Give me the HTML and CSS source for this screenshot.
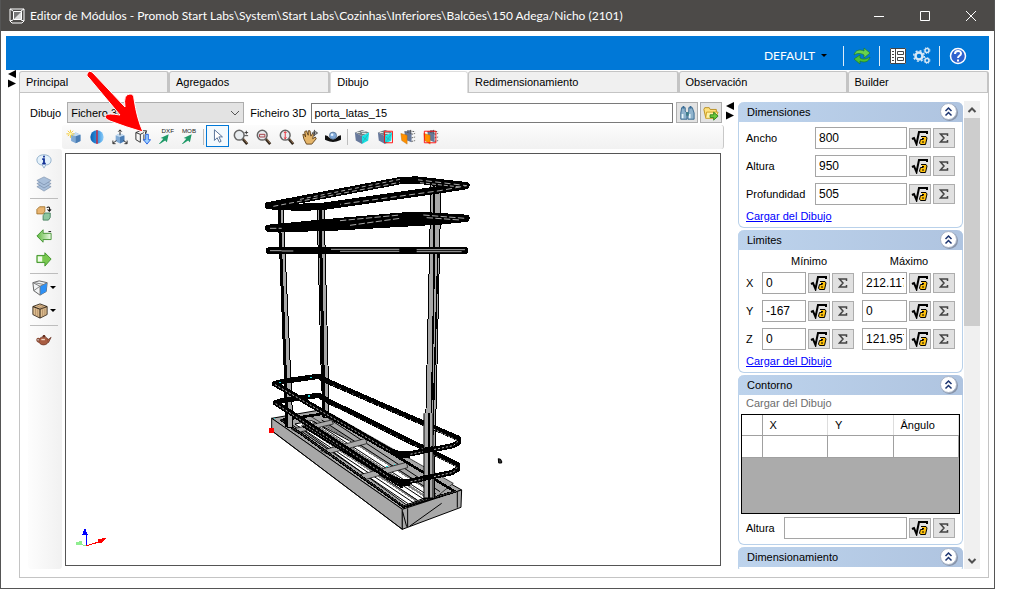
FILE: index.html
```html
<!DOCTYPE html>
<html lang="es">
<head>
<meta charset="utf-8">
<title>Editor de Módulos</title>
<link rel="stylesheet" href="styles.css">
</head>
<body>
<svg class="defs" aria-hidden="true">
  <defs>
    <linearGradient id="blueball"><stop offset="0" stop-color="#0d5fae"/><stop offset=".5" stop-color="#2b8fe0"/><stop offset="1" stop-color="#8fcdf8"/></linearGradient>
    <linearGradient id="greenfade"><stop offset="0" stop-color="#5cb83c"/><stop offset="1" stop-color="#eefbe8"/></linearGradient>
    <symbol id="cube" viewBox="0 0 16 16">
      <path d="M2 4l6-3 6 3v8l-6 3-6-3z" fill="#7fa9d4"/><path d="M2 4l6-3 6 3-6 2z" fill="#c4dcf2"/><path d="M8 6l6-2v8l-6 3z" fill="#4a7db4"/>
    </symbol>
    <symbol id="lens" viewBox="0 0 18 18">
      <path d="M11 11l5 6" stroke="#33281d" stroke-width="3"/><path d="M12 11l4 5" stroke="#a8815d" stroke-width="1"/>
      <circle cx="7" cy="7" r="5.500" fill="#e8ecef" stroke="#666" stroke-width="1.700"/>
    </symbol>
    <symbol id="root" viewBox="0 0 18 16">
      <path d="M1 9l2-1 2.500 6L8 2h8v2" fill="none" stroke="#000" stroke-width="2"/>
      <path d="M10 6.500h5l1 1.500-1.500 6.500h-5L8.500 13l1-3.500h3" fill="#ffc20e" stroke="#000" stroke-width="1"/><path d="M11 12h2M11 8.500h2" stroke="#000"/>
    </symbol>
    <symbol id="sigma" viewBox="0 0 10 10"><path d="M8.500 3V1H1.500l3.500 4-3.500 4h7V7" fill="none" stroke="#444" stroke-width="1.500"/></symbol>
    <symbol id="fold" viewBox="0 0 20 20">
      <circle cx="10.500" cy="10.500" r="8.500" fill="#8793a8"/><circle cx="9.500" cy="9.500" r="8" fill="#fff" stroke="#a9b5c8"/>
      <path d="M6.500 9l3-3 3 3M6.500 13.500l3-3 3 3" fill="none" stroke="#1b3470" stroke-width="1.500"/>
    </symbol>
    <symbol id="cyancube" viewBox="0 0 18 18">
      <path d="M1 4l8-3 8 3-8 4z" fill="#747d82"/><path d="M3 4h4M8 3h5M9 5h5" stroke="#eef1f2"/><path d="M1 4l8 4v9l-7-4z" fill="#66789b"/>
      <path d="M9 8l8-4-1 9-7 4z" fill="#12e4e6"/><path d="M9 16l7-10M10 9l5 4" stroke="#3f9aa0" stroke-width=".7"/>
    </symbol>
    <symbol id="orangebox" viewBox="0 0 18 18">
      <path d="M5 3l7-2 1 4v10l-7-3z" fill="#66789b"/><path d="M5 3l8 2M8 2l9 1M13 6l4-1M13 10l4-1M13 14l4-1M12 1v4" stroke="#555" stroke-dasharray="2 1"/>
      <path d="M1 5l7 2v10l-6-4z" fill="#ff9000" stroke="#b96800" stroke-width=".5"/>
    </symbol>
    <symbol id="greenarrow" viewBox="0 0 18 18">
      <path d="M2 17l5-6-3-1 9-4-2 9-2-2-6 4z" fill="#1f9a68"/>
    </symbol>
    <symbol id="pair" viewBox="0 0 8 18"><path d="M8 0v8L0 4zM0 9.500v8l8-4z" fill="#000"/></symbol>
  </defs>
</svg>

<div class="window">
  <header class="titlebar">
    <svg class="app-icon" viewBox="0 0 16 16"><path d="M1 1h14v12l-2 2H3l-2-2z" fill="none" stroke="#fff"/><path d="M4.500 3.500h8v8h-8z" fill="#ddd" stroke="#fff"/><path d="M5 4h7l-7 7z" fill="#777"/><path d="M1 1l3 2M15 1l-3 2M1 13l3-1M15 13l-3-1" stroke="#fff"/></svg>
    <h1 class="title">Editor de Módulos - Promob Start Labs\System\Start Labs\Cozinhas\Inferiores\Balcões\150 Adega/Nicho (2101)</h1>
    <div class="caption-buttons">
      <button class="caption" aria-label="Minimizar"><svg viewBox="0 0 10 10"><path d="M0 5.500h10" stroke="#fff"/></svg></button>
      <button class="caption" aria-label="Maximizar"><svg viewBox="0 0 10 10"><path d="M.5.5h9v9h-9z" fill="none" stroke="#fff"/></svg></button>
      <button class="caption" aria-label="Cerrar"><svg viewBox="0 0 10 10"><path d="M0 0l10 10M10 0L0 10" stroke="#fff"/></svg></button>
    </div>
  </header>

  <div class="client">
    <div class="ribbon">
      <button class="profile">DEFAULT<svg class="caret" viewBox="0 0 6 4"><path d="M0 0h6L3 3z" fill="#000"/></svg></button>
      <span class="rule"></span>
      <button class="ribbon-button" aria-label="Actualizar"><svg viewBox="0 0 18 18"><path d="M1 8c1-5 6-6 10-4V1l6 5-6 5V8C8 6 4 6 1 8z" fill="#68d34c" stroke="#1c7d2b" stroke-width=".7"/><path d="M17 10c-1 5-6 6-10 4v3l-6-5 6-4v3c3 2 7 1 10-1z" fill="#4dc233" stroke="#1c7d2b" stroke-width=".7"/></svg></button>
      <span class="rule"></span>
      <button class="ribbon-button" aria-label="Panel"><svg viewBox="0 0 18 18"><path d="M1 1h16v16H1z" fill="#fff"/><path d="M1.500 1.500h15v15h-15zM6.500 2v14M8.500 4.500h6v3h-6zM8.500 10.500h6v3h-6zM3 4.500h2M3 7.500h2M3 10.500h2M3 13.500h2" fill="none" stroke="#444"/></svg></button>
      <button class="ribbon-button" aria-label="Opciones"><svg viewBox="0 0 18 18"><g fill="none" stroke="#d8e8f6"><circle cx="6" cy="9" r="3.500" stroke-width="2.500"/><circle cx="6" cy="9" r="5.300" stroke-width="1.500" stroke-dasharray="2 2.160"/><circle cx="14" cy="3.500" r="2" stroke-width="1.500"/><circle cx="14" cy="13.500" r="2" stroke-width="1.500"/><circle cx="14" cy="3.500" r="3" stroke-dasharray="1 1.360"/><circle cx="14" cy="13.500" r="3" stroke-dasharray="1 1.360"/></g></svg></button>
      <span class="rule"></span>
      <button class="ribbon-button help" aria-label="Ayuda"><svg viewBox="0 0 18 18"><circle cx="9" cy="9" r="7.500" fill="#2f62cf" stroke="#fff" stroke-width="1.500"/><path d="M6 7c0-4 6-4 6-.5C12 9 9 8.500 9 11M9 12.500v2" fill="none" stroke="#fff" stroke-width="2"/></svg></button>
    </div>

    <div class="tabrow">
      <button class="shift" aria-label="Mover panel izquierdo"><svg viewBox="0 0 8 18"><use href="#pair"/></svg></button>
      <div class="tabs" role="tablist">
        <button class="tab t1" role="tab">Principal</button>
        <button class="tab t2" role="tab">Agregados</button>
        <button class="tab t3 active" role="tab" aria-selected="true">Dibujo</button>
        <button class="tab t4" role="tab">Redimensionamiento</button>
        <button class="tab t5" role="tab">Observación</button>
        <button class="tab t6" role="tab">Builder</button>
      </div>
    </div>

    <main class="page">
      <section class="editor">
        <form class="source">
          <label for="kind">Dibujo</label>
          <span class="select-box">
            <select id="kind"><option>Fichero 3D</option></select>
            <svg viewBox="0 0 10 6"><path d="M1 1l4 4 4-4" fill="none" stroke="#555"/></svg>
          </span>
          <label for="file">Ficheiro 3D</label>
          <input id="file" class="file" type="text" value="porta_latas_15">
          <button type="button" class="square" aria-label="Buscar"><svg viewBox="0 0 18 18"><path d="M3 3h4v4l2 2V16H2V9zM15 3h-4v4l-1 2v7h7V9z" fill="#8fb3cd" stroke="#32648c"/><path d="M4 10v5M12 10v5" stroke="#e7f7fa" stroke-width="2"/><path d="M8 8h3v4H8z" fill="#3d7d88"/><path d="M4 1h2v3H4zM12 1h2v3h-2z" fill="#3b6c97"/></svg></button>
          <button type="button" class="square" aria-label="Abrir"><svg viewBox="0 0 18 18"><path d="M2 3h5l1 2h7v9H3L1 5z" fill="#ffe17c" stroke="#b58a17"/><path d="M4 8h13l-3 7H3z" fill="#fff2a6" stroke="#c99a1c"/><path d="M8 11h4V8l5 4.500-5 4.500v-3H8z" fill="#6cc93b" stroke="#2c7d18"/></svg></button>
        </form>

        <div class="toolbar">
          <button class="tool" aria-label="Nuevo"><svg viewBox="0 0 18 18"><use href="#cube" x="4" y="3" width="14" height="14"/><path d="M5 1v9M.5 5.500h9M2 2l6 6M8 2L2 8" stroke="#f4c527" stroke-width="1"/><circle cx="5" cy="5.500" r="1.500" fill="#fff8b0"/></svg></button>
          <button class="tool" aria-label="Espejo"><svg viewBox="0 0 18 18"><circle cx="9" cy="9" r="7.500" fill="url(#blueball)"/><path d="M9 1v16" stroke="#f00" stroke-width="1.200"/></svg></button>
          <button class="tool" aria-label="Extender"><svg viewBox="0 0 18 18"><use href="#cube" x="2" y="4" width="14" height="13"/><path d="M9 7V1M7 3l2-2 2 2M5 13l-4 3M1 13v3.500h3M13 13l4 3M17 13v3.500h-3" fill="none" stroke="#222"/></svg></button>
          <button class="tool" aria-label="Importar"><svg viewBox="0 0 18 18"><path d="M1 4l5 2v9l-5-3zM6 6l4-2M1 4l5-2M12 6V3M8 2h5l-1 3M10 6v7" fill="none" stroke="#222"/><path d="M12 6h3v6h2.500L13.500 17l-4-5H12z" fill="#9ed1ff" stroke="#1e5be0"/></svg></button>
          <button class="tool label-tool" aria-label="Exportar DXF"><svg viewBox="0 0 18 18"><use href="#greenarrow" x="-1" y="0" width="18" height="18"/><text x="4" y="5">DXF</text></svg></button>
          <button class="tool label-tool" aria-label="Exportar MOB"><svg viewBox="0 0 18 18"><use href="#greenarrow" x="-1" y="0" width="18" height="18"/><text x="1" y="5">MOB</text></svg></button>
          <span class="divider"></span>
          <button class="tool selected" aria-label="Seleccionar"><svg viewBox="0 0 18 18"><path d="M5 2v12l3-3 2.500 5 2-1-2.500-5h4z" fill="#fff" stroke="#47648e"/></svg></button>
          <button class="tool" aria-label="Zoom"><svg viewBox="0 0 18 18"><use href="#lens"/><path d="M13 4h4M15 2v4M13 7.500h4" stroke="#333"/></svg></button>
          <button class="tool" aria-label="Zoom ventana"><svg viewBox="0 0 18 18"><use href="#lens"/><path d="M4 6h6v3H4z" fill="#e4e4e4" stroke="#a03038"/></svg></button>
          <button class="tool" aria-label="Zoom extensión"><svg viewBox="0 0 18 18"><use href="#lens"/><path d="M7 3v8M5.500 4.500L7 3l1.500 1.500M5.500 9.500L7 11l1.500-1.500" fill="none" stroke="#e8232c"/></svg></button>
          <button class="tool" aria-label="Desplazar"><svg viewBox="0 0 18 18"><path d="M5 17l-3-6-1-5 2 0 1 3-1-6 2-1 2 5V2l2 0 1 6 2-3 1 1-1 5 3-2 1 2-5 6z" fill="#e5b569" stroke="#5b3c14"/><path d="M14 1v7M11 4.500h7" stroke="#333"/><circle cx="14.500" cy="4.500" r="2" fill="none" stroke="#666"/></svg></button>
          <button class="tool" aria-label="Orbitar"><svg viewBox="0 0 18 18"><path d="M0 7l3 1c3 4 9 4 12 0l3-1v5l-2 1c-4 2-10 2-14 0l-2-1z" fill="#111"/><circle cx="9" cy="7.500" r="4" fill="#7fa8d8" stroke="#5c7693"/><circle cx="8" cy="6.500" r="1.500" fill="#e6f3ff"/></svg></button>
          <span class="divider"></span>
          <button class="tool" aria-label="Vista cubo"><svg viewBox="0 0 18 18"><use href="#cyancube"/></svg></button>
          <button class="tool" aria-label="Límites cubo"><svg viewBox="0 0 18 18"><use href="#cyancube"/><path d="M8.500 2.500h9v13h-9z" fill="none" stroke="#f00"/></svg></button>
          <button class="tool" aria-label="Vista puerta"><svg viewBox="0 0 18 18"><use href="#orangebox"/></svg></button>
          <button class="tool" aria-label="Límites puerta"><svg viewBox="0 0 18 18"><use href="#orangebox"/><path d="M1.500 2.500h13v13h-13z" fill="none" stroke="#f00"/></svg></button>
        </div>

        <div class="workspace">
          <div class="sidebar">
            <button class="tool" aria-label="Información"><svg viewBox="0 0 18 18"><path d="M9 2C4 2 1 4.500 1 8s3 5.500 6 5.500L9 17l2-3.500c4 0 6-2.500 6-5.500s-3-6-8-6z" fill="#e4f1fb" stroke="#8cabc8"/><path d="M9 3v2M7 7h2v5M7 12h4" fill="none" stroke="#102f94" stroke-width="2"/></svg></button>
            <button class="tool" aria-label="Capas"><svg viewBox="0 0 18 18"><g fill="#a9bfda" stroke="#687f9c" stroke-width=".6"><path d="M1 12l8-4 8 4-8 5z"/><path d="M1 8.500l8-4 8 4-8 5z"/><path d="M1 5l8-4 8 4-8 5z"/></g></svg></button>
            <span class="divider"></span>
            <button class="tool" aria-label="Reemplazar"><svg viewBox="0 0 18 18"><path d="M1 5l3-3h6v5l-2 3H1z" fill="#e9b572" stroke="#a3752f"/><path d="M8 12l2-3h6v5l-2 3H8z" fill="#8dc8a0" stroke="#457f5c"/><path d="M12 3c3-2 4 0 3 3M13 5l2 2 2-2" fill="none" stroke="#111" stroke-width="1.200"/></svg></button>
            <button class="tool" aria-label="Anterior"><svg viewBox="0 0 18 18"><path d="M1 9l7-7v4h9v7H8v3z" fill="url(#greenfade)" stroke="#3d8f2c"/><path d="M14 4h3" stroke="#111"/></svg></button>
            <button class="tool" aria-label="Siguiente"><svg viewBox="0 0 18 18"><path d="M17 9l-7-7v3H1v8h9v4z" fill="#79c84f" stroke="#3c9227"/><path d="M2 6h5v6H2z" fill="#eefbe8"/></svg></button>
            <span class="divider"></span>
            <button class="tool drop" aria-label="Vista"><svg viewBox="0 0 18 18"><path d="M1 3l7-2 9 2-1 10-7 4-7-5z" fill="#f2f4f5" stroke="#555"/><path d="M9 7l8-4-1 10-7 4z" fill="#2d90f5"/><path d="M1 3l8 4v10M9 7l8-4M2 12l7-5M3 3l10 2" fill="none" stroke="#777"/></svg><svg class="caret" viewBox="0 0 6 4"><path d="M0 0h6L3 3z" fill="#000"/></svg></button>
            <button class="tool drop" aria-label="Material"><svg viewBox="0 0 18 18"><path d="M1 4l8-3 8 3v9l-8 4-8-4z" fill="#dfbf91" stroke="#2f2418"/><path d="M1 4l8 3 8-3M9 7v10" fill="none" stroke="#2f2418" stroke-width="1.200"/><path d="M4 6v8M6.500 7v8M12 7v8M14.500 6v8M5 3l7 3M8 2l6 3" stroke="#a37f5b" stroke-width=".8"/></svg><svg class="caret" viewBox="0 0 6 4"><path d="M0 0h6L3 3z" fill="#000"/></svg></button>
            <span class="divider"></span>
            <button class="tool" aria-label="Renderizar"><svg viewBox="0 0 18 18"><ellipse cx="8.500" cy="10" rx="5.500" ry="4.500" fill="#a95d42" stroke="#653021" stroke-width=".8"/><path d="M13 9l4-3-3 6" fill="#a95d42" stroke="#653021" stroke-width=".8"/><path d="M4 7.500C0 6 0 11 4 11.500" fill="none" stroke="#8b4a33" stroke-width="1.300"/><path d="M7 5.500l1-2h2l1 2" fill="#653021"/><path d="M6 8.500h4" stroke="#f0d2bd" stroke-width="1.500"/></svg></button>
          </div>

          <div class="viewport">
            <svg class="scene" viewBox="66 154 440 411" shape-rendering="crispEdges">
              <!-- tray -->
              <g transform="translate(240 350) scale(.3333)" stroke="#000" stroke-width="3" stroke-linejoin="round">
                <path d="M95 205L240 180L665 420L487 478z" fill="#a8a8a8"/>
                <path d="M165 222L215 212L610 422L500 465z" fill="#fff"/>
                <path d="M210 198L270 190L640 400L590 440L515 385z" fill="#a8a8a8" stroke-width="2"/>
                <g fill="none" stroke-width="7" stroke="#888"><path d="M185 225L535 455M215 218L560 442M250 218L585 432"/></g>
                <g fill="none" stroke-width="3"><path d="M158 226L510 465M178 230L526 462M190 222L540 456M205 220L550 447M222 215L570 440M245 210L588 432M265 205L600 425"/></g>
                <g fill="#a8a8a8" stroke-width="2"><path d="M155 238L275 210L280 222L172 248zM242 302L378 265L380 281L262 312zM360 374L500 337L503 353L378 388z"/></g>
                <path d="M95 205L487 478V538L95 242z" fill="#a8a8a8"/>
                <path d="M487 478L665 420L663 472L487 538z" fill="#a8a8a8"/>
                <path d="M95 242L487 538M503 475v56M510 528L605 460M652 425v48M488 485l12 45" fill="none"/>
                <path d="M125 210L490 470L645 425L258 190z" fill="none" stroke-width="8"/>
                <path d="M120 207L490 468L648 424" fill="none" stroke="#888" stroke-width="2" stroke-dasharray="5 4"/>
                <path d="M190 225L490 410" fill="none" stroke-width="14"/><path d="M190 225L490 410" fill="none" stroke="#999" stroke-width="3" stroke-dasharray="5 5"/>
              </g>
              <!-- uprights -->
              <g fill="#a8a8a8" stroke="#000" stroke-width="1">
                <path d="M278 206h5l7 154 3 67h-6l-3-67z"/><path d="M317 204h7l4 161 1 52h-6l-2-52z"/><path d="M431 184h10l-4 181-3 133h-10l3-133z"/>
                <path d="M279 206l6 159 2 62M320 204l4 213" fill="none" stroke-width="3"/><path d="M434 185v90l-4 223M438 250l-7 248" fill="none" stroke-width="1.500"/>
              </g>
              <!-- upper rails -->
              <g transform="translate(240 165) scale(.3333)" fill="none" stroke-linejoin="round">
                <g stroke="#000" stroke-width="22">
                  <path d="M85 122L480 47L530 45L678 62L600 74L250 124L180 127z"/>
                  <path d="M86 190L250 174L480 154L550 152L678 160L600 168L250 188z"/>
                  <path d="M88 257H675" stroke-width="21" stroke-linecap="round"/>
                </g>
                <g stroke="#aaa" stroke-width="3">
                  <path d="M180 103L480 43" stroke-dasharray="12 9"/><path d="M100 124L480 52" stroke-dasharray="15 9"/><path d="M530 44L680 62L600 77L300 118" stroke-dasharray="18 10"/><path d="M540 53L660 66" stroke-dasharray="12 6"/>
                  <path d="M90 190h35M300 167L480 150M330 181L480 160M550 150L675 160M560 158L660 165" stroke-dasharray="19 7"/>
                  <path d="M90 257h35M273 253H478M300 259H478M530 254H675M530 260H665M125 258h35"/>
                </g>
                <path d="M480 45h53M485 151h43M480 257h48" stroke="#000" stroke-width="20"/>
              </g>
              <!-- lower rails -->
              <g transform="translate(240 350) scale(.3333)" fill="none" stroke-linejoin="round">
                <g stroke="#000" stroke-width="16">
                  <path d="M103 101L130 94L235 79L265 95L655 265L655 278L635 288L490 315L450 302z"/>
                  <path d="M106 158L130 151L235 136L265 153L652 344L652 358L635 368L490 398L450 382z"/>
                </g>
                <g stroke="#bbb" stroke-width="3" stroke-dasharray="6 6">
                  <path d="M105 104L450 303M500 315L640 287L655 273L570 232"/><path d="M107 161L450 384M500 398L640 367L652 351L570 310"/>
                  <path d="M280 106L560 230M280 168L560 302" stroke-dasharray="3 18"/>
                </g>
                <path d="M475 314h35M475 398h35" stroke="#000" stroke-width="20"/>
                <path d="M552 190V444h27V190" fill="#a8a8a8" stroke="#000" stroke-width="3"/><path d="M567 190V444" stroke="#000" stroke-width="4"/>
                <path d="M549 302l32-6M549 385l32-6" stroke="#000" stroke-width="16"/>
                <path d="M102 205h4M210 82h5M118 97h4M438 349h5M461 344h5M205 138h5" stroke="#20dce0" stroke-width="4"/>
                <path d="M87 234h15v15H87z" fill="#f00"/><path d="M775 326l7 2 3 6v5h-9z" fill="#333" stroke="#000" stroke-width="3"/>
              </g>
              <!-- axes -->
              <path d="M86 546v-13" stroke="#00f"/><path d="M85 528l3 7h-6z" fill="#00f"/><path d="M86 546l16-5" stroke="#f00"/><path d="M98 539l8-1-5 5h-3z" fill="#f00"/><path d="M86 546l-6-2" stroke="#8fee90"/><path d="M76 542l6-1v4h-6z" fill="#8fee90"/>
            </svg>
          </div>
        </div>
      </section>

      <button class="shift panel-shift" aria-label="Mover panel derecho"><svg viewBox="0 0 8 18"><use href="#pair"/></svg></button>

      <aside class="side">
        <div class="groups">
          <section class="group">
            <h2>Dimensiones<button class="fold" aria-label="Contraer Dimensiones"><svg viewBox="0 0 20 20"><use href="#fold"/></svg></button></h2>
            <div class="rows">
              <div class="row wide"><label for="ancho">Ancho</label><input id="ancho" value="800"><button class="mini" aria-label="Fórmula"><svg class="rt"><use href="#root"/></svg></button><button class="mini" aria-label="Suma"><svg class="sg"><use href="#sigma"/></svg></button></div>
              <div class="row wide"><label for="alt">Altura</label><input id="alt" value="950"><button class="mini" aria-label="Fórmula"><svg class="rt"><use href="#root"/></svg></button><button class="mini" aria-label="Suma"><svg class="sg"><use href="#sigma"/></svg></button></div>
              <div class="row wide"><label for="prof">Profundidad</label><input id="prof" value="505"><button class="mini" aria-label="Fórmula"><svg class="rt"><use href="#root"/></svg></button><button class="mini" aria-label="Suma"><svg class="sg"><use href="#sigma"/></svg></button></div>
            </div>
            <a class="load" href="#">Cargar del Dibujo</a>
          </section>

          <section class="group">
            <h2>Limites<button class="fold" aria-label="Contraer Limites"><svg viewBox="0 0 20 20"><use href="#fold"/></svg></button></h2>
            <div class="minmax"><span>Mínimo</span><span>Máximo</span></div>
            <div class="rows limits">
              <div class="row pairrow"><label for="x0">X</label><input id="x0" value="0"><button class="mini" aria-label="Fórmula"><svg class="rt"><use href="#root"/></svg></button><button class="mini" aria-label="Suma"><svg class="sg"><use href="#sigma"/></svg></button><input class="max" aria-label="X máximo" value="212.1171"><button class="mini" aria-label="Fórmula"><svg class="rt"><use href="#root"/></svg></button><button class="mini" aria-label="Suma"><svg class="sg"><use href="#sigma"/></svg></button></div>
              <div class="row pairrow"><label for="y0">Y</label><input id="y0" value="-167"><button class="mini" aria-label="Fórmula"><svg class="rt"><use href="#root"/></svg></button><button class="mini" aria-label="Suma"><svg class="sg"><use href="#sigma"/></svg></button><input class="max" aria-label="Y máximo" value="0"><button class="mini" aria-label="Fórmula"><svg class="rt"><use href="#root"/></svg></button><button class="mini" aria-label="Suma"><svg class="sg"><use href="#sigma"/></svg></button></div>
              <div class="row pairrow"><label for="z0">Z</label><input id="z0" value="0"><button class="mini" aria-label="Fórmula"><svg class="rt"><use href="#root"/></svg></button><button class="mini" aria-label="Suma"><svg class="sg"><use href="#sigma"/></svg></button><input class="max" aria-label="Z máximo" value="121.9571"><button class="mini" aria-label="Fórmula"><svg class="rt"><use href="#root"/></svg></button><button class="mini" aria-label="Suma"><svg class="sg"><use href="#sigma"/></svg></button></div>
            </div>
            <a class="load" href="#">Cargar del Dibujo</a>
          </section>

          <section class="group">
            <h2>Contorno<button class="fold" aria-label="Contraer Contorno"><svg viewBox="0 0 20 20"><use href="#fold"/></svg></button></h2>
            <span class="load disabled">Cargar del Dibujo</span>
            <div class="grid-box">
              <table>
                <thead><tr><th class="handle"></th><th>X</th><th>Y</th><th>Ângulo</th></tr></thead>
                <tbody><tr><td class="handle"></td><td></td><td></td><td></td></tr></tbody>
              </table>
            </div>
            <div class="rows outline">
              <div class="row long"><label for="calt">Altura</label><input id="calt" value=""><button class="mini" aria-label="Fórmula"><svg class="rt"><use href="#root"/></svg></button><button class="mini" aria-label="Suma"><svg class="sg"><use href="#sigma"/></svg></button></div>
            </div>
          </section>

          <section class="group">
            <h2>Dimensionamiento<button class="fold" aria-label="Contraer Dimensionamiento"><svg viewBox="0 0 20 20"><use href="#fold"/></svg></button></h2>
            <div class="rows"></div>
          </section>
        </div>
        <div class="scrollbar">
          <button aria-label="Subir"><svg viewBox="0 0 10 8"><path d="M1.500 6L5 2.500 8.500 6" fill="none" stroke="#505050" stroke-width="2"/></svg></button>
          <div class="track"><div class="thumb"></div></div>
          <button aria-label="Bajar"><svg viewBox="0 0 10 8"><path d="M1.500 2L5 5.500 8.500 2" fill="none" stroke="#505050" stroke-width="2"/></svg></button>
        </div>
      </aside>
    </main>
  </div>
</div>

<svg class="pointer" viewBox="82 66 66 68" aria-hidden="true">
  <path d="M87 74Q89 69 93 73L125 107Q123 94 130 94Q134 94 134 99Q137 119 143 132Q126 127 110 121Q103 118 106 115Q108 113 120 115L89 78Q86 76 87 74z" fill="#f00" stroke="#fff" stroke-width="1"/>
</svg>
</body>
</html>
```
FILE: styles.css
```css
* { box-sizing: border-box; }

body {
  margin: 0;
  padding: 0 37px 13px 0;
  height: 100vh;
  background: #fff;
  color: #000;
  font: 11px "Liberation Sans", Arial, sans-serif;
}

button, input, select { font: inherit; color: inherit; margin: 0; border-radius: 0; }
button { padding: 0; border: 0; background: none; display: flex; align-items: center; justify-content: center; }
svg { display: block; flex: none; }
.defs { position: absolute; width: 0; height: 0; }

.window {
  height: 100%;
  display: flex;
  flex-direction: column;
  border: 1px solid #555;
  border-top: 0;
}

.titlebar {
  flex: none;
  height: 31px;
  display: flex;
  align-items: center;
  padding-left: 8px;
  gap: 5px;
  background: #4c4a48;
  color: #fff;
}
.app-icon { width: 16px; height: 16px; }
.title { flex: 1; margin: 0; font: 12px Lato, "Noto Sans", sans-serif; white-space: nowrap; }
.caption-buttons { display: flex; }
.caption { width: 46px; height: 30px; }
.caption svg { width: 10px; height: 10px; }

.client { flex: 1; min-height: 0; display: flex; flex-direction: column; padding: 5px 5px 10px; }

.ribbon {
  flex: none;
  height: 34px;
  display: flex;
  align-items: center;
  justify-content: flex-end;
  padding: 5px 19px 0 0;
  background: #0078d7;
}
.profile { color: #fff; font: 12px Lato, "Noto Sans", sans-serif; gap: 6px; margin-right: 16px; }
.caret { width: 6px; height: 4px; }
.rule { width: 1px; height: 20px; background: #dcecf9; }
.ribbon-button { width: 24px; height: 22px; }
.ribbon-button svg { width: 18px; height: 18px; }
.ribbon .rule + .ribbon-button { margin-left: 6px; }
.ribbon-button + .rule { margin-left: 5px; }

.tabrow { flex: none; display: flex; padding-left: 2px; }
.shift { align-self: flex-start; }
.shift svg { width: 8px; height: 18px; }
.tabs { flex: 1; display: flex; margin: 1px 0 0 3px; border-bottom: 1px solid #c4c4c4; }
.tab {
  height: 21px;
  justify-content: flex-start;
  padding-left: 6px;
  background: #f0f0f0;
  border: 1px solid #c4c4c4;
  border-bottom: 0;
  border-right-width: 2px;
  border-radius: 3px 3px 0 0;
}
.active { background: #fff; margin-bottom: -1px; height: 22px; padding-bottom: 1px; border-color: #ddd; border-right-width: 1px; }
.t1 { flex: 149; } .t2 { flex: 161; } .t3 { flex: 137; } .t4 { flex: 213; } .t5 { flex: 169; } .t6 { flex: 140; }

.page {
  flex: 1;
  min-height: 0;
  display: flex;
  margin-left: 13px;
  padding: 8px;
  border: 1px solid #c4c4c4;
  border-top: 0;
}
.editor { flex: 1; min-width: 0; display: flex; flex-direction: column; }
.source { display: flex; align-items: center; height: 21px; margin-top: 1px; padding: 0 2px; flex: none; }
.select-box { position: relative; width: 177px; margin: 0 6px; }
.select-box select { width: 100%; height: 21px; padding: 0 3px; appearance: none; background: #e3e3e3; border: 1px solid #adadad; }
.select-box svg { position: absolute; right: 4px; top: 8px; width: 10px; height: 6px; }
.file { flex: 1; min-width: 0; height: 20px; margin: 0 3px 0 5px; padding: 0 2px; border: 1px solid #7a7a7a; }
.square { width: 22px; height: 21px; background: #e3e3e3; border: 1px solid #adadad; }
.square + .square { margin-left: 2px; }
.square svg { width: 16px; height: 16px; }

.toolbar {
  flex: none;
  display: flex;
  align-items: flex-start;
  height: 24px;
  margin: 2px 0 0 34px;
  border-radius: 3px;
  border-right: 1px solid #c8c8c8;
  background: linear-gradient(#fcfcfc, #f1f1f1);
}
.tool { width: 23px; height: 23px; }
.tool svg { width: 16px; height: 16px; }
.selected { height: 22px; border: 1px solid #0078d7; background: #f3f9fd; }
.label-tool svg { overflow: visible; }
.label-tool text { font: 7px "Liberation Sans", Arial, sans-serif; fill: #222; }
.divider { background: #bdbdbd; }
.toolbar .divider { width: 1px; height: 16px; margin: 4px 2px 0 3px; }

.workspace { flex: 1; min-height: 0; display: flex; gap: 3px; }
.sidebar {
  flex: none;
  width: 34px;
  display: flex;
  flex-direction: column;
  padding-left: 4px;
  border-radius: 3px;
  background: linear-gradient(90deg, #fdfdfd, #f1f1f1);
}
.sidebar .divider { height: 1px; width: 28px; margin: 3px 0 2px -2px; flex: none; }
.sidebar .drop { width: 28px; gap: 2px; margin-left: -2px; }
.tool .caret { width: 6px; height: 4px; }
.viewport { flex: 1; min-width: 0; margin: 4px 3px 3px 0; border: 1px solid #555; overflow: hidden; }
.scene { width: 440px; height: 411px; }

.panel-shift { margin: 1px 4px 0 2px; }

.side { flex: none; width: 242px; display: flex; gap: 1px; }
.groups { flex: 1; overflow: hidden; padding-top: 1px; }
.group { border: 1px solid #b9d1ea; border-top: 0; border-radius: 6px; margin-bottom: 2px; display: flow-root; }
.group h2 {
  display: flex;
  align-items: center;
  justify-content: space-between;
  height: 20px;
  margin: 0 -1px;
  padding: 0 4px 0 9px;
  border-radius: 6px 6px 0 0;
  background: linear-gradient(90deg, #bdd3ec, #afc4e0);
  font: inherit;
}
.fold svg { width: 20px; height: 20px; }
.rows { display: flex; flex-direction: column; gap: 6px; padding: 5px 7px 0; }
.row { display: grid; align-items: center; column-gap: 2px; height: 22px; }
.row input { width: 100%; min-width: 0; height: 22px; padding: 0 0 0 3px; border: 1px solid #a5a5a5; font-size: 12px; }
.wide { grid-template-columns: 67px 1fr 22px 22px; }
.long { grid-template-columns: 36px 1fr 22px 22px; }
.pairrow { grid-template-columns: 14px 44fr 22px 22px 51fr 22px 22px; }
.pairrow .max { margin-left: 6px; width: auto; padding-right: 2px; }
.mini { width: 22px; height: 20px; background: #e1e1e1; border: 1px solid #adadad; }
.rt { width: 18px; height: 16px; }
.sg { width: 10px; height: 10px; }
.load { display: block; width: max-content; margin: 5px 0 4px 7px; line-height: 13px; color: #00f; text-decoration: underline; }
.disabled { margin: 2px 0 4px 7px; color: #6d6d6d; text-decoration: none; }
.minmax { display: flex; height: 17px; padding: 5px 0 0 20px; line-height: 13px; }
.minmax span { width: 100px; text-align: center; }
.limits { padding-top: 5px; }
.outline { padding-top: 3px; padding-bottom: 5px; }

.grid-box { height: 100px; margin: 0 2px; border: 1px solid #000; background: #ababab; }
.grid-box table { width: 100%; table-layout: fixed; border-collapse: collapse; background: #fff; }
.grid-box th { height: 20px; padding: 0 0 0 7px; text-align: left; font-weight: normal; border-right: 1px solid #ddd; border-bottom: 1px solid #a0a0a0; }
.grid-box td { height: 22px; padding: 0; border-right: 1px solid #a0a0a0; border-bottom: 1px solid #a0a0a0; }
.grid-box .handle { width: 20px; border-right-color: #a0a0a0; }

.scrollbar { flex: none; width: 16px; display: flex; flex-direction: column; background: #f0f0f0; }
.scrollbar button { height: 17px; }
.scrollbar svg { width: 10px; height: 8px; }
.track { flex: 1; }
.thumb { height: 48%; background: #cdcdcd; }

.pointer { position: absolute; left: 82px; top: 66px; width: 66px; height: 68px; pointer-events: none; }
```
